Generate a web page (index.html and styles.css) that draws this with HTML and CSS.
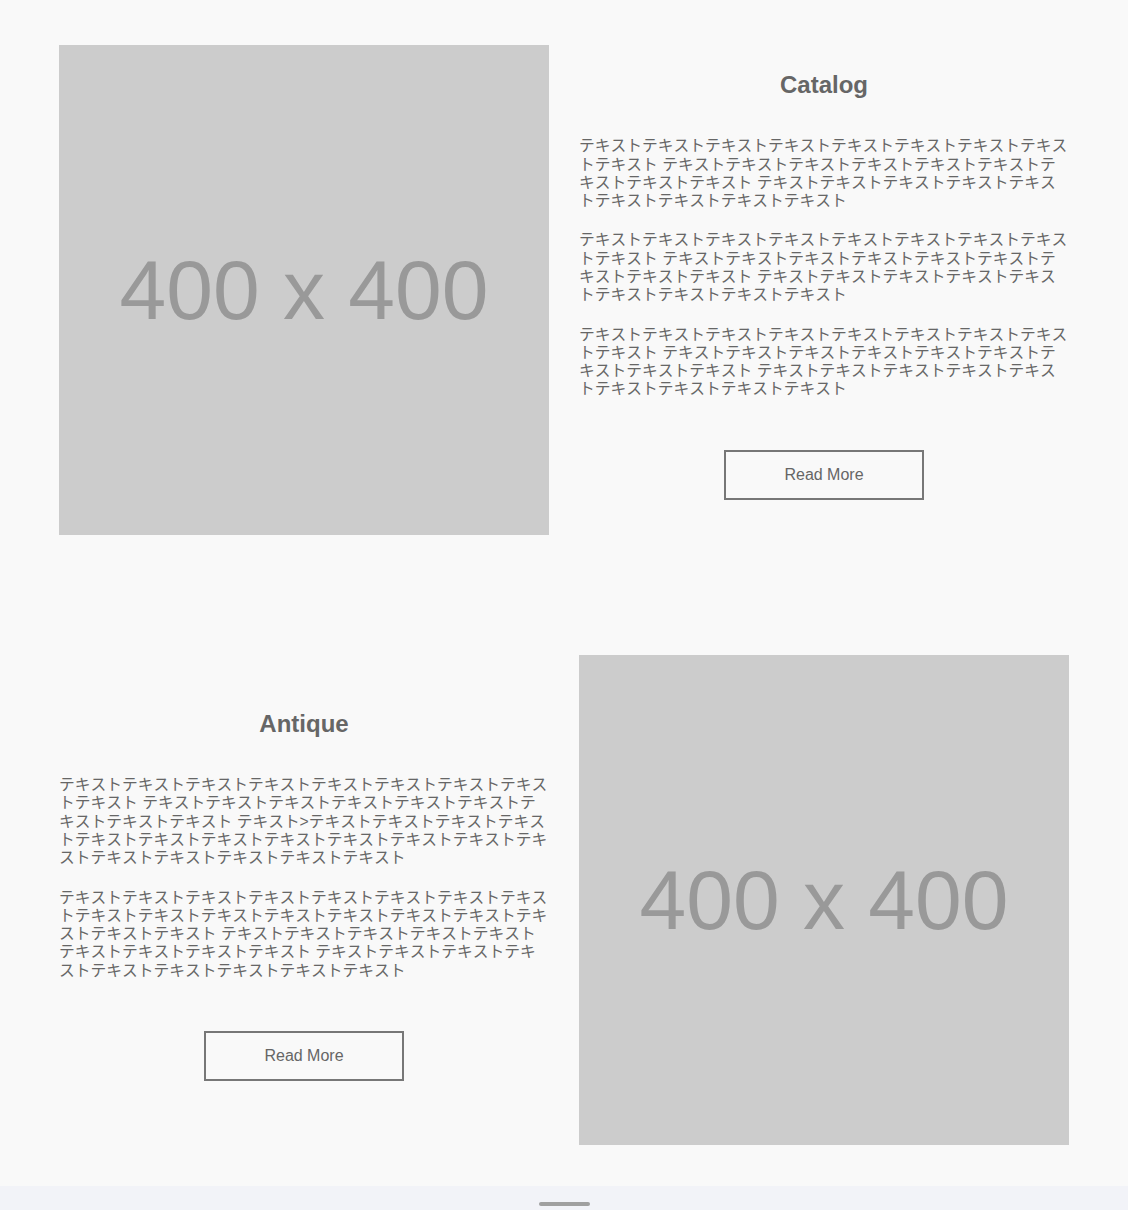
FILE: index.html
```html
<!DOCTYPE html>
<html lang="ja">
<head>
    <meta charset="UTF-8">
    <meta name="viewport" content="width=device-width, initial-scale=1.0">
    <title>Catalog</title>
    <link rel="stylesheet" href="styles.css">
</head>
<body>
    <main class="page">
        <!-- Catalog -->
        <section class="feature">
            <div class="thumb">400 x 400</div>
            <div class="feature-body">
                <h2>Catalog</h2>
                <p>テキストテキストテキストテキストテキストテキストテキストテキストテキスト テキストテキストテキストテキストテキストテキストテキストテキストテキスト テキストテキストテキストテキストテキストテキストテキストテキストテキスト</p>
                <p>テキストテキストテキストテキストテキストテキストテキストテキストテキスト テキストテキストテキストテキストテキストテキストテキストテキストテキスト テキストテキストテキストテキストテキストテキストテキストテキストテキスト</p>
                <p>テキストテキストテキストテキストテキストテキストテキストテキストテキスト テキストテキストテキストテキストテキストテキストテキストテキストテキスト テキストテキストテキストテキストテキストテキストテキストテキストテキスト</p>
                <a class="more" href="#">Read More</a>
            </div>
        </section>

        <!-- Antique -->
        <section class="feature">
            <div class="feature-body">
                <h2>Antique</h2>
                <p>テキストテキストテキストテキストテキストテキストテキストテキストテキスト テキストテキストテキストテキストテキストテキストテキストテキストテキスト テキスト&gt;テキストテキストテキストテキストテキストテキストテキストテキストテキストテキストテキストテキストテキストテキストテキストテキストテキスト</p>
                <p>テキストテキストテキストテキストテキストテキストテキストテキストテキストテキストテキストテキストテキストテキストテキストテキストテキストテキスト テキストテキストテキストテキストテキストテキストテキストテキストテキスト テキストテキストテキストテキストテキストテキストテキストテキストテキスト</p>
                <a class="more" href="#">Read More</a>
            </div>
            <div class="thumb">400 x 400</div>
        </section>
    </main>
    <div class="home-bar"><span class="handle"></span></div>
</body>
</html>
```

FILE: styles.css
```css
body {
    margin: 0;
    background-color: #f9f9f9;
    color: #666;
    font-family: "Liberation Sans", "Noto Sans CJK JP", sans-serif;
}

.page {
    width: 1010px;
    margin: 0 auto;
    padding: 45px 0 41px;
    display: flex;
    flex-direction: column;
    gap: 120px;
}

.feature {
    display: grid;
    grid-template-columns: 490px 490px;
    gap: 30px;
}

/* placeholder image */
.thumb {
    height: 490px;
    background-color: #ccc;
    color: #999;
    font-size: 84px;
    line-height: 1;
    display: flex;
    align-items: center;
    justify-content: center;
}

.feature-body {
    display: flex;
    flex-direction: column;
    justify-content: center;
    padding-bottom: 9px;
}

.feature-body h2 {
    margin: 0 0 38px;
    font-size: 24px;
    line-height: 28px;
    text-align: center;
    color: #666;
}

.feature-body p {
    margin: 0 0 21px;
    font-size: 15.75px;
    line-height: 18.3px;
    font-kerning: none;
}

.feature-body p:last-of-type {
    margin-bottom: 0;
}

.more {
    align-self: center;
    box-sizing: border-box;
    width: 200px;
    height: 50px;
    margin-top: 51px;
    border: 2px solid #777;
    color: #666;
    font-size: 16px;
    text-decoration: none;
    display: flex;
    align-items: center;
    justify-content: center;
}

/* bottom indicator */
.home-bar {
    height: 24px;
    background-color: #f2f3f8;
    display: flex;
    justify-content: center;
}

.handle {
    width: 51px;
    height: 4px;
    margin-top: 16px;
    border-radius: 2px;
    background-color: #a0a0a0;
}
```
